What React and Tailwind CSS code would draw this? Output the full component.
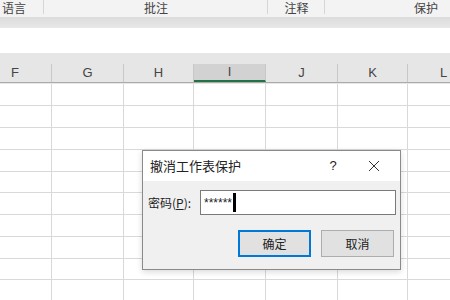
import React from "react";

const cols = [
  { l: "F", w: 73 },
  { l: "G", w: 72 },
  { l: "H", w: 70 },
  { l: "I", w: 72, sel: true },
  { l: "J", w: 72 },
  { l: "K", w: 70 },
  { l: "L", w: 72 },
];
const rows = [22, 22, 22, 22, 21, 22, 22, 22, 21, 22];

export default function App() {
  return (
    <div
      className="relative w-[450px] h-[300px] overflow-hidden bg-white"
      style={{ fontFamily: '"Noto Sans CJK SC", "Liberation Sans", sans-serif' }}
    >
      {/* ribbon group labels */}
      <div className="flex h-[17px] bg-[#f3f3f3] text-[12px] leading-[16px] text-[#444]">
        <div className="w-[44px] shrink-0 h-full relative pl-[2px]">
          <span>语言</span>
          <div className="absolute right-0 top-0 h-[14px] w-px bg-[#d6d6d6]" />
        </div>
        <div className="w-[224px] shrink-0 h-full relative flex justify-center">
          <span>批注</span>
          <div className="absolute right-0 top-0 h-[14px] w-px bg-[#d6d6d6]" />
        </div>
        <div className="w-[57px] shrink-0 h-full relative flex justify-center">
          <span>注释</span>
          <div className="absolute right-0 top-0 h-[14px] w-px bg-[#d6d6d6]" />
        </div>
        <div className="w-[202px] shrink-0 h-full flex justify-center">
          <span>保护</span>
        </div>
      </div>
      <div className="h-[11px] bg-gradient-to-b from-[#dcdcdc] to-[#e8e8e8]" />
      <div className="h-[26px] bg-white border-b border-[#e6e6e6]" />
      {/* column header */}
      <div className="h-[30px] bg-[#e6e6e6] flex flex-col">
        <div className="h-[10px]" />
        <div className="flex ml-[-21px] h-[19px] border-b border-[#ababab]">
          {cols.map((c) => (
            <div
              key={c.l}
              className={
                "shrink-0 h-full flex items-center justify-center border-r border-[#c8c8c8] text-[13px] text-[#444] " +
                (c.sel ? "bg-[#d2d2d2] border-b-2 border-b-[#217346]" : "")
              }
              style={{ width: c.w, fontFamily: '"Liberation Sans", sans-serif' }}
            >
              {c.l}
            </div>
          ))}
        </div>
      </div>
      {/* grid */}
      <div className="flex flex-col ml-[-21px]">
        {rows.map((h, i) => (
          <div key={i} className="flex" style={{ height: h }}>
            {cols.map((c) => (
              <div
                key={c.l}
                className="shrink-0 h-full border-r border-b border-[#d9d9d9]"
                style={{ width: c.w }}
              />
            ))}
          </div>
        ))}
      </div>

      {/* dialog */}
      <div className="absolute left-[142px] top-[150px] w-[259px] h-[120px] border border-[#8a8a8a] bg-[#f0f0f0] shadow-[0_2px_6px_rgba(0,0,0,0.15)] flex flex-col">
        <div className="h-[30px] bg-white flex items-center text-[13px] text-[#222]">
          <span className="pl-[7px]">撤消工作表保护</span>
          <span className="ml-auto w-[14px] text-center mr-[28px]" style={{ fontFamily: '"Liberation Sans", sans-serif' }}>?</span>
          <svg width="12" height="12" viewBox="0 0 12 12" className="mr-[20px]">
            <path d="M1 1 L11 11 M11 1 L1 11" stroke="#333" strokeWidth="1" />
          </svg>
        </div>
        <div className="flex items-center mt-[9px] text-[12px] text-[#222]">
          <span className="pl-[5px] w-[57px]">
            密码(<span className="underline">P</span>):
          </span>
          <div className="w-[196px] h-[25px] bg-white border border-[#7a7a7a] flex items-center pl-[3px]">
            <span className="text-[12px]" style={{ fontFamily: '"Liberation Sans", sans-serif' }}>******</span>
            <span className="w-[3px] h-[19px] bg-black ml-[1px]" />
          </div>
        </div>
        <div className="flex mt-[15px] text-[12px] text-[#222]">
          <div className="ml-[95px] w-[73px] h-[27px] border-2 border-[#0078d7] bg-[#e1e1e1] flex items-center justify-center">
            确定
          </div>
          <div className="ml-[10px] w-[73px] h-[27px] border border-[#adadad] bg-[#e1e1e1] flex items-center justify-center">
            取消
          </div>
        </div>
      </div>
    </div>
  );
}
